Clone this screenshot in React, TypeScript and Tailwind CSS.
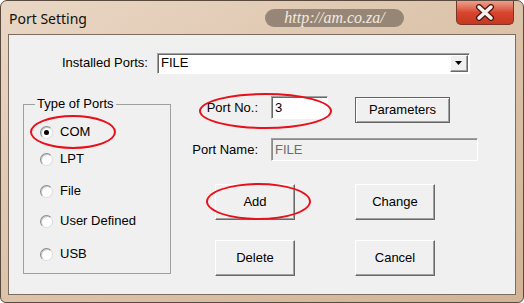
import { ReactNode } from 'react'

const PORT_TYPES = [
  { label: 'COM', checked: true, gap: 'mt-[10px]' },
  { label: 'LPT', checked: false, gap: 'mt-[7px]' },
  { label: 'File', checked: false, gap: 'mt-[12px]' },
  { label: 'User Defined', checked: false, gap: 'mt-[10px]' },
  { label: 'USB', checked: false, gap: 'mt-[13px]' },
]

const WinButton = ({ children, className = '' }: { children: ReactNode; className?: string }) => (
  <button
    type="button"
    className={[
      'flex items-center justify-center border border-t-white border-l-white border-r-[#696969] border-b-[#696969] bg-[#f0f0f0] text-black shadow-[inset_-1px_-1px_0_#a0a0a0]',
      className,
    ].join(' ')}
  >
    {children}
  </button>
)

const Radio = ({ checked }: { checked: boolean }) => (
  <span className="flex h-[13px] w-[13px] shrink-0 items-center justify-center rounded-full border border-t-[#8a8a8a] border-l-[#8a8a8a] border-r-[#dcdcdc] border-b-[#dcdcdc] bg-white shadow-[inset_1px_1px_0_#c8c8c8]">
    {checked ? <span className="h-[5px] w-[5px] rounded-full bg-black" /> : null}
  </span>
)

const Ellipse = ({ className }: { className: string }) => (
  <div className={['pointer-events-none absolute rounded-[50%] border-2 border-[#e8101a]', className].join(' ')} />
)

export default function App() {
  return (
    <div className="relative h-[303px] w-[524px] overflow-hidden rounded-t-[7px] rounded-b-[6px] border border-[#5a4a3e] bg-gradient-to-br from-[#e9d7c5] via-[#dcc3aa] to-[#d1b496] font-['Liberation_Sans',Arial,sans-serif] text-[13px] text-black">
      {/* title bar */}
      <div className="flex h-[33px] items-start">
        <span className="ml-[8px] mt-[8px] w-[88px] font-['Noto_Sans',sans-serif] text-[14px] leading-[20px] text-[#111]">
          Port Setting
        </span>
        <span className="ml-[168px] mt-[8px] flex h-[18px] w-[139px] items-center justify-center rounded-full bg-[#8a7a6c]/85 font-['Liberation_Serif',serif] text-[16px] italic leading-none text-[#f3eadf]">
          http://am.co.za/
        </span>
        <div className="ml-[52px] flex h-[24px] w-[58px] items-center justify-center rounded-b-[5px] border border-t-0 border-[#7b3428] bg-gradient-to-b from-[#ec9f8c] via-[#d8452f] to-[#c5381f]">
          <svg width="22" height="17" viewBox="0 0 22 17">
            <path d="M5 3 L17 14 M17 3 L5 14" stroke="#4a1a12" strokeWidth="6" strokeLinecap="round" />
            <path d="M5 3 L17 14 M17 3 L5 14" stroke="#f4f1ee" strokeWidth="3.5" strokeLinecap="round" />
          </svg>
        </div>
      </div>

      {/* client area */}
      <div className="mx-[7px] h-[261px] border border-[#7d6d60] bg-[#f0f0f0]">
        <div className="ml-[53px] mt-[18px] flex h-[20px] items-center">
          <span className="w-[86px]">Installed Ports:</span>
          <div className="ml-[9px] flex h-[21px] w-[313px] items-center border border-t-[#a0a0a0] border-l-[#a0a0a0] border-r-white border-b-white bg-white shadow-[inset_1px_1px_0_#696969]">
            <span className="ml-[3px] flex-1">FILE</span>
            <div className="mr-[1px] flex h-[17px] w-[18px] items-center justify-center border border-t-white border-l-white border-r-[#696969] border-b-[#696969] bg-[#f0f0f0] shadow-[inset_-1px_-1px_0_#a0a0a0]">
              <svg width="8" height="4" viewBox="0 0 8 4">
                <path d="M0 0 H7 L3.5 4 Z" fill="#000" />
              </svg>
            </div>
          </div>
        </div>

        <div className="mt-[23px] flex">
          <fieldset className="ml-[14px] h-[178px] w-[148px] border border-[#a0a0a0] pl-[16px] pr-[6px]">
            <legend className="-ml-[5px] px-[2px] leading-[16px]">Type of Ports</legend>
            {PORT_TYPES.map((item) => (
              <div key={item.label} className={['flex h-[20px] items-center', item.gap].join(' ')}>
                <Radio checked={item.checked} />
                <span className="ml-[7px]">{item.label}</span>
              </div>
            ))}
          </fieldset>

          <div className="ml-[9px]">
            <div className="flex items-start">
              <span className="w-[78px] text-right leading-[23px]">Port No.:</span>
              <div className="ml-[13px] flex h-[23px] w-[57px] items-center border border-t-[#a0a0a0] border-l-[#a0a0a0] border-r-white border-b-white bg-white pl-[3px] shadow-[inset_1px_1px_0_#696969]">
                3
              </div>
              <WinButton className="ml-[27px] mt-[1px] h-[26px] w-[95px] !border-[#646464] shadow-[inset_1px_1px_0_#ffffff,inset_-1px_-1px_0_#a0a0a0]">
                Parameters
              </WinButton>
            </div>

            <div className="mt-[15px] flex items-start">
              <span className="w-[78px] text-right leading-[23px]">Port Name:</span>
              <div className="ml-[13px] flex h-[23px] w-[207px] items-center border border-t-[#a0a0a0] border-l-[#a0a0a0] border-r-white border-b-white bg-[#f0f0f0] pl-[3px] text-[#6d6d6d] shadow-[inset_1px_1px_0_#8a8a8a]">
                FILE
              </div>
            </div>

            <div className="mt-[23px] flex">
              <WinButton className="ml-[35px] h-[36px] w-[80px]">Add</WinButton>
              <WinButton className="ml-[60px] h-[36px] w-[80px]">Change</WinButton>
            </div>
            <div className="mt-[20px] flex">
              <WinButton className="ml-[35px] h-[36px] w-[80px]">Delete</WinButton>
              <WinButton className="ml-[60px] h-[36px] w-[80px]">Cancel</WinButton>
            </div>
          </div>
        </div>
      </div>

      <Ellipse className="left-[29px] top-[114px] h-[34px] w-[86px]" />
      <Ellipse className="left-[198px] top-[92px] h-[36px] w-[133px]" />
      <Ellipse className="left-[205px] top-[182px] h-[37px] w-[105px]" />
    </div>
  )
}
